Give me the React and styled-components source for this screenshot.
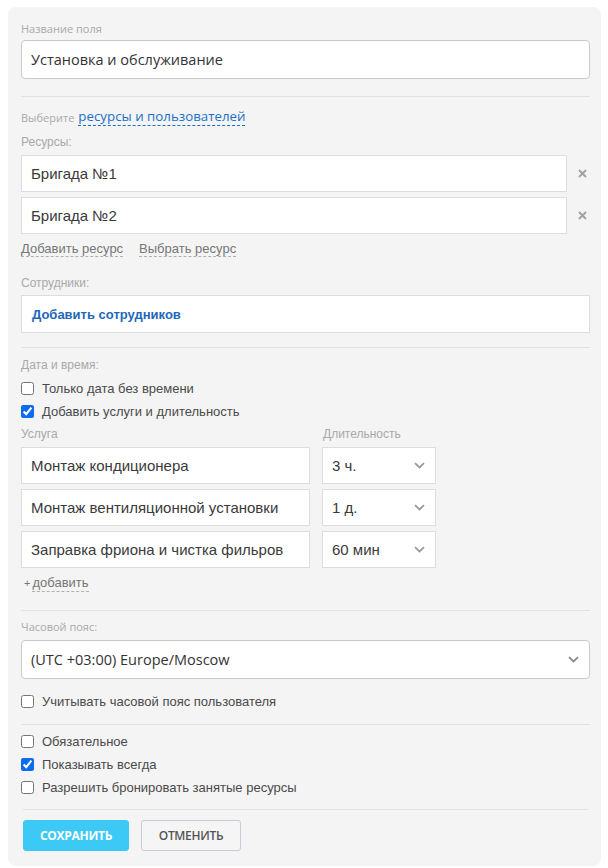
import React from "react";
import styled, { createGlobalStyle } from "styled-components";

const Global = createGlobalStyle`
  html, body { margin: 0; padding: 0; background: #ffffff; }
  body { font-family: "Liberation Sans", Arial, sans-serif; }
  * { box-sizing: border-box; }
`;

const SEGOE = `"Open Sans", "Noto Sans", sans-serif`;
const ARIAL = `"Liberation Sans", Arial, sans-serif`;

const Panel = styled.div`
  width: 593px;
  margin: 7px 0 2px 8px;
  background: #f4f4f4;
  border-radius: 8px;
  padding: 14px 11px 15px 13px;
  display: flex;
  flex-direction: column;
`;

const Label = styled.div`
  font-family: ${(p) => (p.$segoe ? SEGOE : ARIAL)};
  font-size: ${(p) => (p.$segoe ? 11 : 12)}px;
  line-height: 16px;
  color: #a9a9a9;
  margin-top: ${(p) => p.$mt || 0}px;
  margin-bottom: ${(p) => p.$mb || 0}px;
  white-space: nowrap;
`;

const RoundInput = styled.div`
  height: 39px;
  flex: none;
  background: #fff;
  border: 1px solid #c9c9cc;
  border-radius: 4px;
  display: flex;
  align-items: center;
  padding: 0 10px 0 9px;
  font-family: ${SEGOE};
  font-size: 14.5px;
  color: #333;
  justify-content: space-between;
`;

const Divider = styled.div`
  height: 1px;
  flex: none;
  background: #e2e2e4;
  margin: ${(p) => p.$mt}px ${(p) => p.$mx || 0}px ${(p) => p.$mb}px;
`;

const ChooseLine = styled.div`
  height: 20px;
  display: flex;
  align-items: center;
  gap: 4px;
`;

const ChooseHint = styled.span`
  font-family: ${SEGOE};
  font-size: 11px;
  color: #a9a9a9;
`;

const BlueDashed = styled.span`
  font-family: ${SEGOE};
  font-size: 13.3px;
  color: #1b6fc8;
  line-height: 17px;
  border-bottom: 1px dashed #1b6fc8;
`;

const ResourceList = styled.div`
  display: flex;
  flex-direction: column;
  gap: 5px;
`;

const ResourceRow = styled.div`
  display: flex;
  align-items: center;
`;

const SquareBox = styled.div`
  flex: ${(p) => (p.$grow ? "1 1 auto" : "none")};
  height: ${(p) => p.$h || 37}px;
  background: #fff;
  border: 1px solid #dcdce2;
  display: flex;
  align-items: center;
  padding: 0 10px 0 9px;
  font-family: ${ARIAL};
  font-size: 15px;
  color: #3a3a3a;
  justify-content: space-between;
  min-width: 0;
`;

const RemoveBtn = styled.span`
  width: 9px;
  margin: 0 3px 0 11px;
  display: flex;
  align-items: center;
  justify-content: center;
`;

const LinksLine = styled.div`
  margin-top: 7px;
  height: 16px;
  display: flex;
  gap: 16px;
`;

const GrayDashed = styled.span`
  font-family: ${ARIAL};
  font-size: 13px;
  color: #777;
  line-height: 16px;
  border-bottom: 1px dashed #b0b0b0;
`;

const AddEmployees = styled.span`
  font-family: ${ARIAL};
  font-size: 13px;
  font-weight: 700;
  color: #1d68b8;
  padding-left: 1px;
`;

const CheckRow = styled.label`
  height: 23px;
  flex: none;
  display: flex;
  align-items: center;
  gap: 8px;
  font-family: ${ARIAL};
  font-size: 13px;
  color: #4a4a4a;
  margin-top: ${(p) => p.$mt || 0}px;
`;

const Check = styled.input`
  margin: 0;
  width: 13px;
  height: 13px;
  accent-color: #0b6cf0;
`;

const ServiceGrid = styled.div`
  display: grid;
  grid-template-columns: 289px 114px;
  column-gap: 12px;
  row-gap: 5px;
`;

const HeadRow = styled.div`
  display: grid;
  grid-template-columns: 289px 114px;
  column-gap: 13px;
  margin-top: 3px;
  margin-bottom: 5px;
`;

const AddMore = styled.div`
  margin-top: 7px;
  height: 16px;
  display: flex;
  align-items: center;
  gap: 2px;
  padding-left: 3px;
  font-family: ${ARIAL};
  font-size: 11px;
  color: #777;
`;

const Buttons = styled.div`
  display: flex;
  gap: 12px;
  margin-left: 2px;
`;

const Button = styled.button`
  height: 31px;
  padding: 0;
  width: ${(p) => p.$w}px;
  border-radius: 3px;
  font-family: ${SEGOE};
  font-size: 12px;
  font-weight: ${(p) => (p.$primary ? 700 : 600)};
  letter-spacing: -0.3px;
  text-transform: uppercase;
  border: 1px solid ${(p) => (p.$primary ? "#3dc9f5" : "#c9ccd2")};
  background: ${(p) => (p.$primary ? "#3dc9f5" : "#f5f5f5")};
  color: ${(p) => (p.$primary ? "#fff" : "#555")};
  cursor: pointer;
`;

const Chevron = ({ color = "#9a9a9a" }) => (
  <svg width="11" height="7" viewBox="0 0 11 7" fill="none">
    <path d="M1 1.2 L5.5 5.5 L10 1.2" stroke={color} strokeWidth="1.8" />
  </svg>
);

const Cross = () => (
  <svg width="9" height="9" viewBox="0 0 9 9">
    <path d="M1 1 L8 8 M8 1 L1 8" stroke="#a0a4aa" strokeWidth="2" />
  </svg>
);

const resources = ["Бригада №1", "Бригада №2"];
const services = [
  ["Монтаж кондиционера", "3 ч."],
  ["Монтаж вентиляционной установки", "1 д."],
  ["Заправка фриона и чистка фильров", "60 мин"],
];

export default function App() {
  return (
    <>
      <Global />
      <Panel>
        <Label $segoe $mb={3}>Название поля</Label>
        <RoundInput>Установка и обслуживание</RoundInput>

        <Divider $mt={17} $mb={10} />

        <ChooseLine>
          <ChooseHint>Выберите</ChooseHint>
          <BlueDashed>ресурсы и пользователей</BlueDashed>
        </ChooseLine>

        <Label $mt={7} $mb={5}>Ресурсы:</Label>
        <ResourceList>
          {resources.map((r) => (
            <ResourceRow key={r}>
              <SquareBox $grow>{r}</SquareBox>
              <RemoveBtn>
                <Cross />
              </RemoveBtn>
            </ResourceRow>
          ))}
        </ResourceList>
        <LinksLine>
          <GrayDashed>Добавить ресурс</GrayDashed>
          <GrayDashed>Выбрать ресурс</GrayDashed>
        </LinksLine>

        <Label $mt={18} $mb={4}>Сотрудники:</Label>
        <SquareBox $h={38}>
          <AddEmployees>Добавить сотрудников</AddEmployees>
        </SquareBox>

        <Divider $mt={14} $mb={9} />

        <Label>Дата и время:</Label>
        <CheckRow $mt={4}>
          <Check type="checkbox" />
          Только дата без времени
        </CheckRow>
        <CheckRow>
          <Check type="checkbox" defaultChecked />
          Добавить услуги и длительность
        </CheckRow>

        <HeadRow>
          <Label>Услуга</Label>
          <Label>Длительность</Label>
        </HeadRow>
        <ServiceGrid>
          {services.map(([s, d]) => (
            <React.Fragment key={s}>
              <SquareBox>{s}</SquareBox>
              <SquareBox>
                {d}
                <Chevron />
              </SquareBox>
            </React.Fragment>
          ))}
        </ServiceGrid>
        <AddMore>
          +<GrayDashed>добавить</GrayDashed>
        </AddMore>

        <Divider $mt={19} $mb={8} />

        <Label $segoe $mb={5}>Часовой пояс:</Label>
        <RoundInput>
          (UTC +03:00) Europe/Moscow
          <Chevron color="#8a8a8a" />
        </RoundInput>
        <CheckRow $mt={11}>
          <Check type="checkbox" />
          Учитывать часовой пояс пользователя
        </CheckRow>

        <Divider $mt={11} $mb={5} />

        <CheckRow>
          <Check type="checkbox" />
          Обязательное
        </CheckRow>
        <CheckRow>
          <Check type="checkbox" defaultChecked />
          Показывать всегда
        </CheckRow>
        <CheckRow>
          <Check type="checkbox" />
          Разрешить бронировать занятые ресурсы
        </CheckRow>

        <Divider $mt={10} $mb={10} $mx={2} />

        <Buttons>
          <Button $primary $w={106}>Сохранить</Button>
          <Button $w={100}>Отменить</Button>
        </Buttons>
      </Panel>
    </>
  );
}
